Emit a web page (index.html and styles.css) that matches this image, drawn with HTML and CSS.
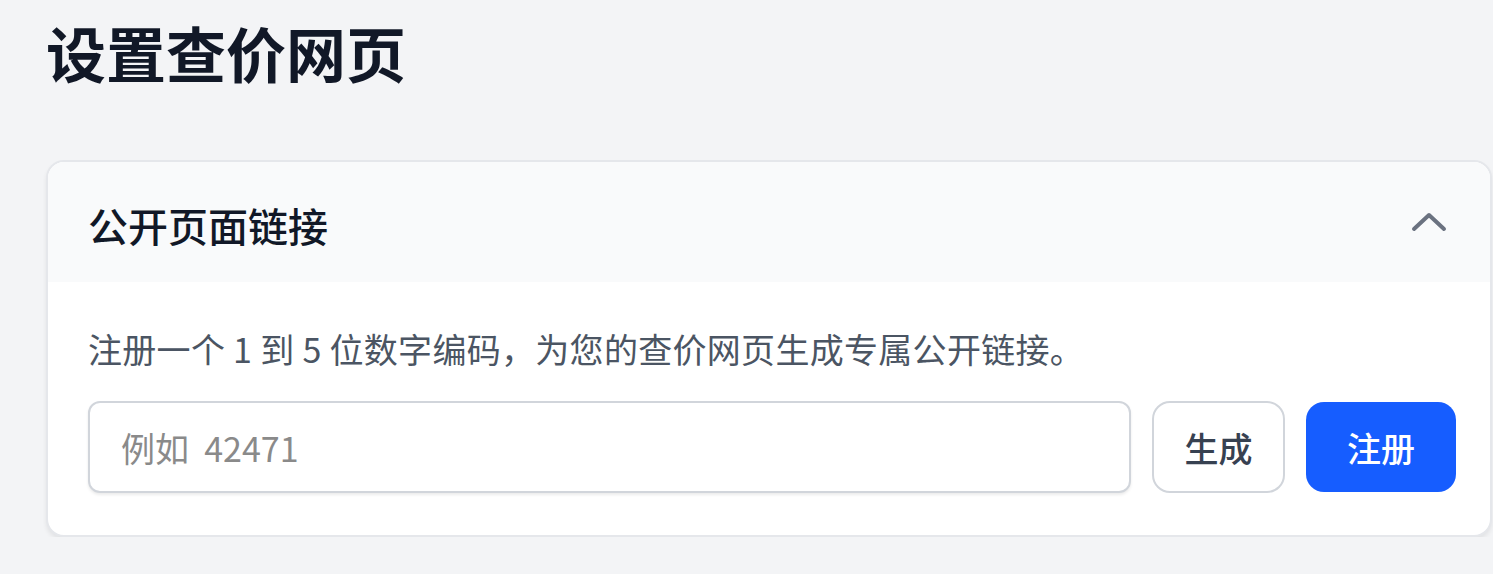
FILE: index.html
```html
<!DOCTYPE html>
<html lang="zh">
<head>
<meta charset="utf-8">
<link rel="stylesheet" href="styles.css">
</head>
<body>
<main class="page">
  <h1 class="title">设置查价网页</h1>
  <section class="card">
    <div class="card-head">
      <h2 class="card-title">公开页面链接</h2>
      <svg class="chevron" width="38" height="22" viewBox="0 0 38 22"><path d="M4 19 L19 5 L34 19" fill="none" stroke="#6b7280" stroke-width="4" stroke-linecap="round" stroke-linejoin="round"/></svg>
    </div>
    <div class="card-body">
      <p class="desc">注册一个 1 到 5 位数字编码，为您的查价网页生成专属公开链接。</p>
      <div class="row">
        <input class="code-input" type="text" placeholder="例如  42471">
        <button class="btn btn-outline">生成</button>
        <button class="btn btn-primary">注册</button>
      </div>
    </div>
  </section>
</main>
</body>
</html>
```

FILE: styles.css
```css
html, body {
  margin: 0;
  padding: 0;
  background: #f3f4f6;
  font-family: "Noto Sans CJK SC", "Noto Sans", sans-serif;
}
.page {
  padding: 16px 1px 0 46px;
}
.title {
  margin: 0;
  font-size: 60px;
  line-height: 72px;
  font-weight: 700;
  color: #111827;
}
.card {
  margin-top: 72px;
  background: #ffffff;
  border: 2px solid #e5e7eb;
  border-radius: 18px;
  overflow: hidden;
  box-shadow: 0 3px 4px rgba(0,0,0,0.07);
}
.card-head {
  display: flex;
  align-items: center;
  justify-content: space-between;
  height: 120px;
  padding: 0 42px 0 40px;
  background: #f9fafb;
}
.card-title {
  margin: 0;
  font-size: 40px;
  line-height: 52px;
  font-weight: 500;
  color: #111827;
  padding-top: 5px;
}
.chevron {
  display: block;
  margin-top: -2px;
}
.card-body {
  padding: 43px 34px 42px 40px;
}
.desc {
  margin: 0;
  font-size: 34px;
  line-height: 48px;
  color: #4b5563;
  letter-spacing: 0.3px;
}
.row {
  display: flex;
  gap: 21px;
  margin-top: 28px;
}
.code-input {
  flex: 1;
  height: 92px;
  box-sizing: border-box;
  border: 2px solid #d1d5db;
  border-radius: 12px;
  padding: 0 31px;
  font-family: "Noto Sans CJK SC", "Noto Sans", sans-serif;
  font-size: 34px;
  color: #111827;
  background: #fff;
  box-shadow: 0 2px 3px rgba(0,0,0,0.08);
  outline: none;
}
.code-input::placeholder {
  color: #8a8a8a;
}
.btn {
  height: 92px;
  box-sizing: border-box;
  border-radius: 18px;
  font-family: "Noto Sans CJK SC", "Noto Sans", sans-serif;
  font-size: 34px;
  font-weight: 500;
  padding: 0;
  cursor: pointer;
}
.btn-outline {
  width: 133px;
  background: #fff;
  border: 2px solid #d1d5db;
  color: #374151;
}
.btn-primary {
  width: 150px;
  background: #165dff;
  border: none;
  color: #fff;
  height: 90px;
  margin-top: 1px;
}
```
